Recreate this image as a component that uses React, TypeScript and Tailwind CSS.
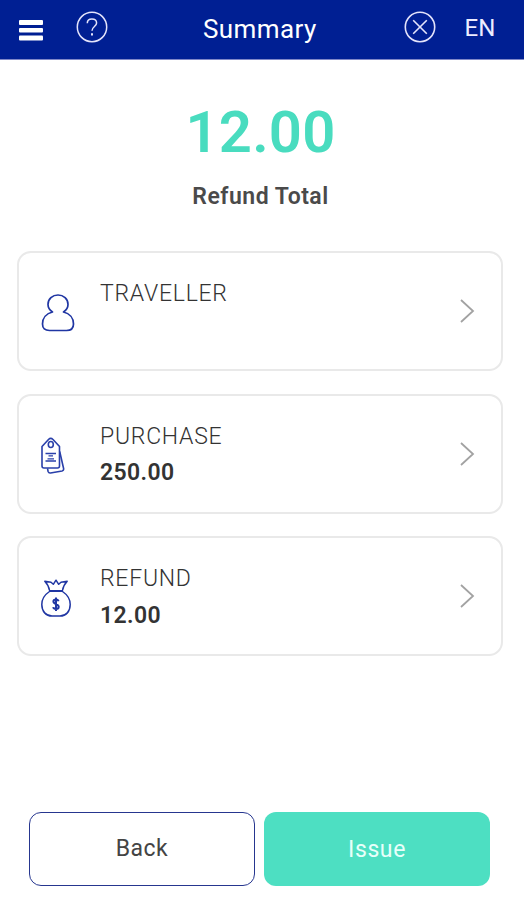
import type { ReactNode } from 'react';

interface SummaryRowProps {
  icon: ReactNode;
  label: string;
  value?: string;
}

function MenuIcon() {
  return (
    <svg width="24" height="21" viewBox="0 0 24 21" fill="#ffffff">
      <rect y="0" width="24" height="5" rx="1" />
      <rect y="8" width="24" height="4.5" rx="1" />
      <rect y="15.5" width="24" height="5" rx="1" />
    </svg>
  );
}

function HelpIcon() {
  return (
    <svg width="32" height="32" viewBox="0 0 32 32" fill="none" stroke="#e4e4fb" strokeWidth="1.5">
      <circle cx="16" cy="16" r="14.7" />
      <path d="M11.3 12.2c0-2.6 2-4.1 4.6-4.1 2.7 0 4.7 1.5 4.7 4 0 3.4-4.6 3.6-4.6 7.7" />
      <path d="M16 22.2v2.2" strokeWidth="2" />
    </svg>
  );
}

function CloseIcon() {
  return (
    <svg width="32" height="32" viewBox="0 0 32 32" fill="none" stroke="#e4e4fb" strokeWidth="1.6">
      <circle cx="16" cy="16" r="14.7" />
      <path d="M9.2 9.2l13.6 13.6M22.8 9.2L9.2 22.8" />
    </svg>
  );
}

function TravellerIcon() {
  return (
    <svg width="34" height="38" viewBox="0 0 34 38" fill="none" stroke="#2036a3" strokeWidth="1.7" strokeLinejoin="round">
      <path d="M11.500 18C8.500 16 7 13.500 7 10.500 7 5 11.500 1 17 1s10 4 10 9.500c0 3-1.500 5.500-4.500 7.500C28.500 19.500 32.500 24 32.500 30c0 4.500-2.500 6.500-7 6.500h-17c-4.500 0-7-2-7-6.500 0-6 4-10.500 10-12z" />
    </svg>
  );
}

function PurchaseIcon() {
  return (
    <svg width="24" height="37" viewBox="0 0 24 37" fill="none" stroke="#2a40aa" strokeWidth="1.6" strokeLinejoin="round">
      <path d="M1 9.5L7.5 2.500Q9.700 .3 12 2.500L18.500 9.500V29Q18.500 31 16.500 31H3Q1 31 1 29z" />
      <path d="M18.700 14.500L22.600 31.500Q23 33.500 21.100 34L9.500 36Q7.700 36.300 7.100 34.500L6.500 31.300" />
      <ellipse cx="9.800" cy="7.500" rx="2.500" ry="3" />
      <path d="M4.500 16.500h10.500M4.500 24h10.500M7.500 18.800h4.500M6.500 21.800h6.500" strokeWidth="1.300" />
    </svg>
  );
}

function RefundIcon() {
  return (
    <svg width="30" height="38" viewBox="0 0 30 38" fill="none" stroke="#2036a3" strokeWidth="1.5" strokeLinejoin="round">
      <path d="M8.500 11.500C8 7.500 6.500 5 3.800 2.200L10 3.300 12.300 5.300 15 1.200 17.700 5.300 20 3.300 26.200 2.200C23.500 5 22 7.500 21.500 11.500" />
      <path d="M8 12h14" strokeWidth="2" />
      <path d="M8.500 12.500C4 15.500 .8 20 .8 25.500c0 7 4.200 11.500 10.200 11.500h8c6 0 10.200-4.500 10.200-11.500 0-5.500-3.200-10-7.700-13" />
      <path d="M17.600 22.200c-.4-1.200-1.300-1.700-2.600-1.700-1.600 0-2.600.8-2.600 2.100 0 3.200 5.300 2 5.300 5.200 0 1.400-1.200 2.200-2.700 2.200-1.500 0-2.500-.6-2.800-1.900M15 18.500v13.500" strokeWidth="2" />
    </svg>
  );
}

function SummaryRow({ icon, label, value }: SummaryRowProps) {
  return (
    <button className="flex h-[120px] w-full rounded-[14px] border-2 border-[#e9e9e9] text-left text-[#333333]">
      <span className="flex h-full w-[81px] shrink-0 items-center pt-[3px] pl-[21.5px]">{icon}</span>
      <span className="flex flex-1 flex-col pt-[25px]">
        <span className="text-[23px] leading-8 font-light tracking-[0.75px]">{label}</span>
        {value && <span className="mt-[4.5px] text-[23px] leading-8 font-semibold tracking-[0.4px]">{value}</span>}
      </span>
      <svg className="mt-[45px] mr-[26px]" width="16" height="26" viewBox="0 0 16 26" fill="none" stroke="#a2a2a2" strokeWidth="1.8">
        <path d="M2 2l12 11L2 24" />
      </svg>
    </button>
  );
}

export default function App() {
  return (
    <div className="flex h-[900px] w-[524px] flex-col bg-white font-['Roboto',sans-serif]">
      <header className="flex h-[60px] shrink-0 border-b border-[#8088c8] bg-[#001f93] text-white">
        <button className="mt-5 ml-[19px] h-[21px]"><MenuIcon /></button>
        <button className="mt-[11px] ml-[33px] h-8"><HelpIcon /></button>
        <h1 className="mt-[13px] ml-[95px] w-[118px] text-[26px] leading-8 tracking-[0.4px]">Summary</h1>
        <button className="mt-[11px] ml-[83px] h-8"><CloseIcon /></button>
        <button className="mt-3 ml-[28.5px] h-8 text-[24px] leading-8 text-[#ececff]">EN</button>
      </header>

      <main className="flex flex-1 flex-col">
        <div className="mt-[37px] pr-[3px] text-center">
          <p className="text-[58px] leading-[70px] font-semibold tracking-[0.2px] text-[#49dcbf]">12.00</p>
          <p className="mt-[14px] text-[23px] leading-8 font-semibold tracking-[0.5px] text-[#4a4a4a]">Refund Total</p>
        </div>
        <div className="mt-[38px] flex flex-col gap-[22.5px] pr-[21px] pl-[17px]">
          <SummaryRow icon={<TravellerIcon />} label="TRAVELLER" />
          <SummaryRow icon={<PurchaseIcon />} label="PURCHASE" value="250.00" />
          <SummaryRow icon={<RefundIcon />} label="REFUND" value="12.00" />
        </div>
      </main>

      <footer className="mb-[14px] flex gap-[9px] pl-[29px]">
        <button className="h-[74px] w-[226px] rounded-[12px] border border-[#26368f] pt-px text-[23px] tracking-[0.5px] text-[#444444]">Back</button>
        <button className="h-[74px] w-[226px] rounded-[12px] bg-[#4ddfc2] pt-0.5 text-[23px] tracking-[0.6px] text-[#e8fffa]">Issue</button>
      </footer>
    </div>
  );
}
